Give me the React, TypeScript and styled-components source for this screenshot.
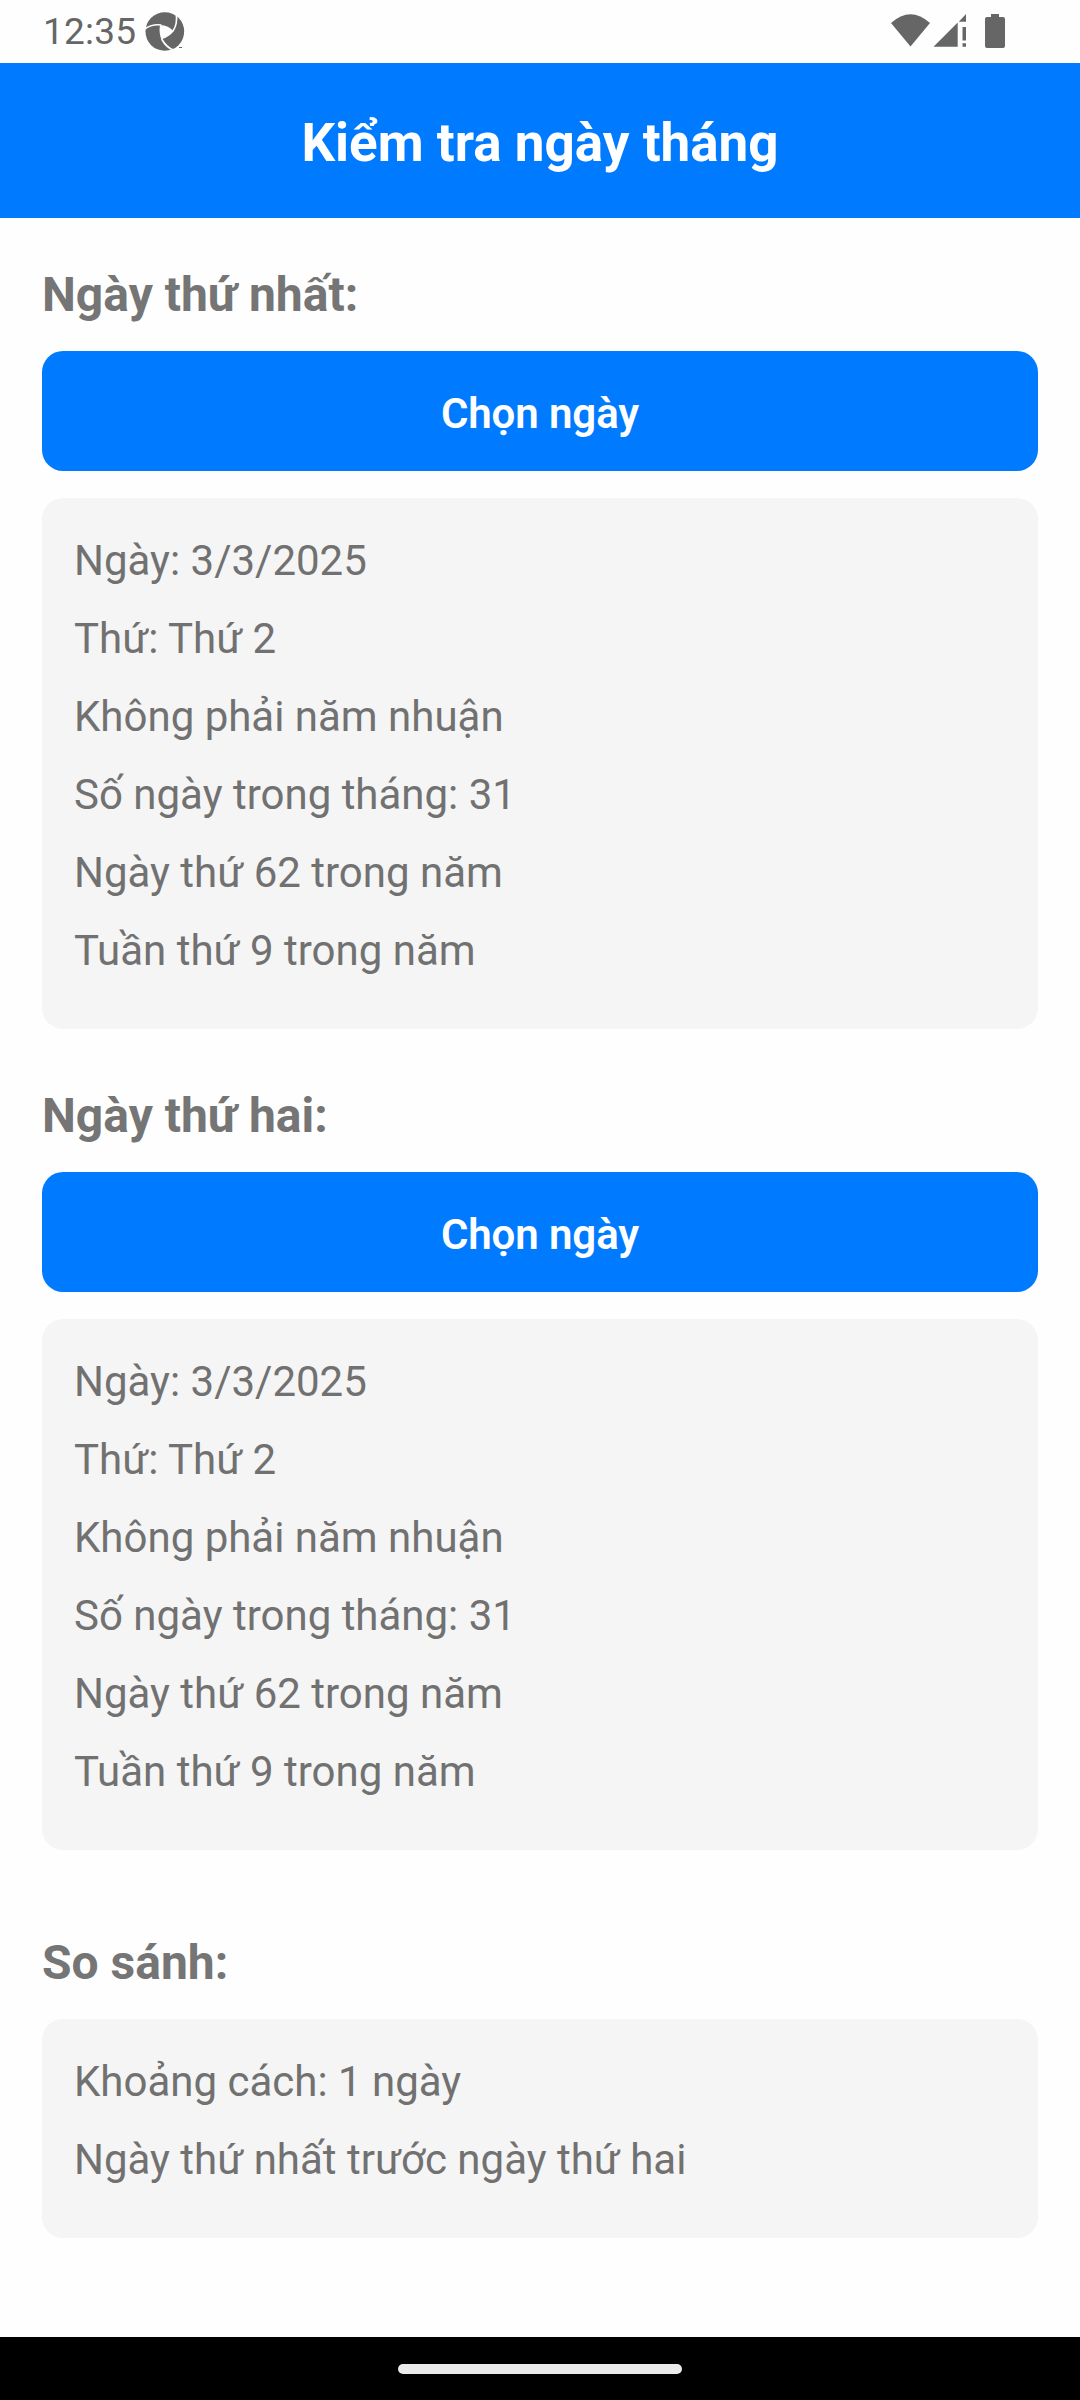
import React from 'react';
import styled, { createGlobalStyle } from 'styled-components';

const GlobalStyle = createGlobalStyle`
  body { margin: 0; background: #fff; font-family: Roboto, "Noto Sans", sans-serif; }
  * { box-sizing: border-box; }
`;

const Screen = styled.div`
  width: 1080px;
  height: 2400px;
  display: flex;
  flex-direction: column;
  background: #fefefe;
  color: #717171;
  overflow: hidden;
`;

const StatusBar = styled.div`
  height: 63px;
  flex: none;
  display: flex;
  align-items: flex-start;
  justify-content: space-between;
  padding: 0 72px 0 43px;
  color: #666;
`;

const StatusGroup = styled.div`
  display: flex;
  align-items: flex-start;
`;

const Clock = styled.span`
  font-size: 37px;
  line-height: 44px;
  padding-top: 10px;
  width: 102px;
  letter-spacing: 0.2px;
`;

const IconSlot = styled.span<{ $top: number }>`
  display: flex;
  padding-top: ${(p) => p.$top}px;
`;

const Header = styled.header`
  height: 155px;
  flex: none;
  background: #007bff;
  display: flex;
  justify-content: center;
  padding-top: 49px;
`;

const Title = styled.h1`
  margin: 0;
  color: #fff;
  font-size: 53px;
  font-weight: 700;
  line-height: 62px;
`;

const Content = styled.main`
  flex: 1;
  padding: 0 42px;
`;

const Section = styled.section<{ $top: number }>`
  padding-top: ${(p) => p.$top}px;
  display: flex;
  flex-direction: column;
`;

const SectionTitle = styled.h2`
  margin: 0 0 26px;
  height: 64px;
  padding-top: 6px;
  font-size: 48px;
  font-weight: 700;
  line-height: 56px;
  color: #757575;
`;

const PickButton = styled.button`
  height: 120px;
  margin: 0 0 27px;
  padding: 6px 0 0;
  border: 0;
  border-radius: 21px;
  background: #007bff;
  color: #fff;
  font: 600 42px/50px Roboto, "Noto Sans", sans-serif;
  letter-spacing: -0.1px;
`;

const Panel = styled.div`
  border-radius: 21px;
  background: #f5f5f5;
  padding: 34px 32px 29px;
`;

const Line = styled.p`
  margin: 0 0 21px;
  font-size: 42px;
  line-height: 57px;
`;

const NavBar = styled.footer`
  height: 63px;
  flex: none;
  background: #000;
  display: flex;
  justify-content: center;
  padding-top: 27px;
`;

const NavHandle = styled.div`
  width: 284px;
  height: 10px;
  border-radius: 5px;
  background: #ebebeb;
`;

const ApertureIcon = () => (
  <svg width="40" height="41" viewBox="435 33 120 123" fill="currentColor">
    <circle cx="494.500" cy="94.500" r="58" />
    <path d="M480 75 Q506 76 521 94 Q508 111 484 118 Q476 98 480 75Z" fill="#fefefe" />
    <g fill="none" stroke="#fefefe" strokeWidth="5">
      <path d="M434 87 Q456 71 484 75" />
      <path d="M519 93 Q534 72 528 36" />
      <path d="M485 117 Q499 143 522 151" />
    </g>
    <path d="M512 148 Q530 147 545 136 L556 150 L530 158Z" fill="#fefefe" />
    <path d="M537 141h9v3h-9z" />
  </svg>
);

const StatusIcons = () => (
  <svg width="118" height="36" viewBox="890 13 118 36" fill="currentColor">
    <path d="M891 23 Q910.5 5.500 930 23 L910.500 46.500Z" />
    <path d="M933.500 46.700 L957.700 22.500 V46.700Z M958.800 21.800 L966 14 V21.800Z M962.500 27h3.500v13.500h-3.500z M962.500 43.300h3.500v3.400h-3.500z" />
    <path d="M991 14h8v3h4q2 0 2 2v27q0 2-2 2h-16q-2 0-2-2v-27q0-2 2-2h4z" />
  </svg>
);

const dateFacts = [
  'Ngày: 3/3/2025',
  'Thứ: Thứ 2',
  'Không phải năm nhuận',
  'Số ngày trong tháng: 31',
  'Ngày thứ 62 trong năm',
  'Tuần thứ 9 trong năm',
];

const comparison = ['Khoảng cách: 1 ngày', 'Ngày thứ nhất trước ngày thứ hai'];

interface InfoSectionProps {
  title: string;
  lines: string[];
  top: number;
  pickable?: boolean;
}

const InfoSection = ({ title, lines, top, pickable }: InfoSectionProps) => (
  <Section $top={top}>
    <SectionTitle>{title}</SectionTitle>
    {pickable && <PickButton type="button">Chọn ngày</PickButton>}
    <Panel>
      {lines.map((line) => (
        <Line key={line}>{line}</Line>
      ))}
    </Panel>
  </Section>
);

export default function App() {
  return (
    <>
      <GlobalStyle />
      <Screen>
        <StatusBar>
          <StatusGroup>
            <Clock>12:35</Clock>
            <IconSlot $top={11}>
              <ApertureIcon />
            </IconSlot>
          </StatusGroup>
          <IconSlot $top={13}>
            <StatusIcons />
          </IconSlot>
        </StatusBar>
        <Header>
          <Title>Kiểm tra ngày tháng</Title>
        </Header>
        <Content>
          <InfoSection title="Ngày thứ nhất:" lines={dateFacts} top={43} pickable />
          <InfoSection title="Ngày thứ hai:" lines={dateFacts} top={53} pickable />
          <InfoSection title="So sánh:" lines={comparison} top={79} />
        </Content>
        <NavBar>
          <NavHandle />
        </NavBar>
      </Screen>
    </>
  );
}
